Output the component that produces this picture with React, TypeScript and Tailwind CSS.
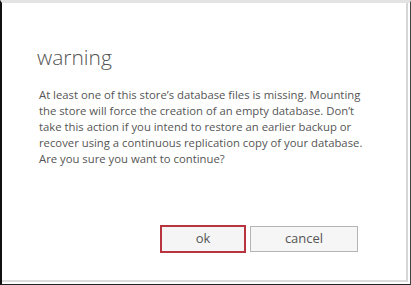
export default function App() {
  return (
    <div className="w-[411px] h-[285px] bg-white overflow-hidden font-['Open_Sans',sans-serif]">
      <div className="w-full h-full border-l-2 border-l-[#111] border-b border-b-[#222] border-r border-r-[#444] border-t-[3px] border-t-[#e3e3e3] flex">
        <div className="flex-1 flex flex-col border-r-2 border-r-[#d6d6d6] border-b-2 border-b-[#dcdcdc] mr-[2px] mb-[2px]">
          <div className="pl-[35px] pt-[40px] text-[21px] leading-[28px] font-light text-[#555]">
            warning
          </div>
          <div className="pl-[37px] pt-[16px] text-[11.3px] leading-[16px] text-[#555]">
            At least one of this store’s database files is missing. Mounting<br />
            the store will force the creation of an empty database. Don’t<br />
            take this action if you intend to restore an earlier backup or<br />
            recover using a continuous replication copy of your database.<br />
            Are you sure you want to continue?
          </div>
          <div className="flex pl-[158px] pt-[58px] gap-[4px] items-center">
            <button className="w-[86px] h-[28px] border-2 border-[#b8353f] bg-[#f5f5f5] text-[13px] text-[#555] flex items-center justify-center">
              ok
            </button>
            <button className="w-[108px] h-[26px] border border-[#b5b5b5] bg-[#f6f6f6] text-[13px] text-[#555] flex items-center justify-center">
              cancel
            </button>
          </div>
        </div>
      </div>
    </div>
  );
}
